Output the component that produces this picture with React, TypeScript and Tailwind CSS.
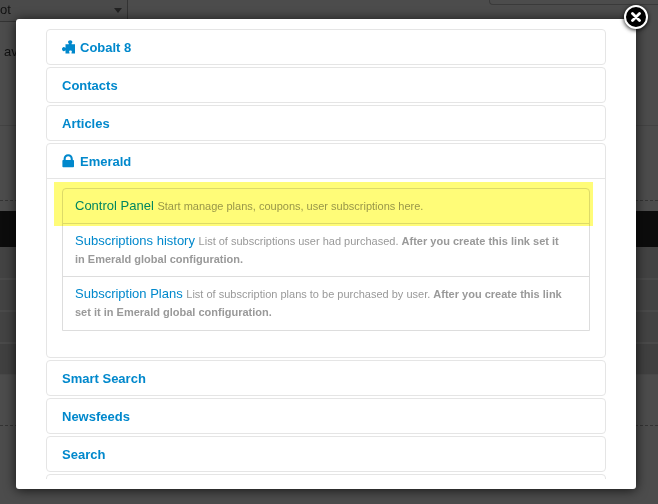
import React from "react";

type Extension = { name?: string; icon?: "puzzle" | "lock"; items?: Item[] };
type Item = { title: string; text: string; note?: string; active?: boolean };

const extensions: Extension[] = [
  { name: "Cobalt 8", icon: "puzzle" },
  { name: "Contacts" },
  { name: "Articles" },
  {
    name: "Emerald",
    icon: "lock",
    items: [
      {
        title: "Control Panel",
        text: "Start manage plans, coupons, user subscriptions here.",
        active: true,
      },
      {
        title: "Subscriptions history",
        text: "List of subscriptions user had purchased.",
        note: "After you create this link set it in Emerald global configuration.",
      },
      {
        title: "Subscription Plans",
        text: "List of subscription plans to be purchased by user.",
        note: "After you create this link set it in Emerald global configuration.",
      },
    ],
  },
  { name: "Smart Search" },
  { name: "Newsfeeds" },
  { name: "Search" },
  {},
];

function Icon({ kind }: { kind: "puzzle" | "lock" }) {
  return (
    <svg viewBox="0 0 13 14" className="-mt-[2px] h-[14px] w-[13px] shrink-0" fill="currentColor" aria-hidden="true">
      {kind === "puzzle" ? (
        <path d="M3.500 4.300h3.300V3.600C6.300 3.200 6 2.700 6 2.100 6 1 7 .2 8.200.2s2.200.8 2.200 1.900c0 .6-.3 1.100-.8 1.500v.7H13V13.500H9.500v-1c.3-.2.4-.5.4-.8 0-.7-.6-1.200-1.400-1.200s-1.400.5-1.400 1.200c0 .3.1.6.4.8v1h-4v-3h-.4c-.3.5-.8.8-1.300.8C.8 11.300 0 10.300 0 9.100s.8-2.200 1.800-2.200c.5 0 1 .3 1.300.8h.4z" />
      ) : (
        <path
          fillRule="evenodd"
          d="M1.600 6V4.900C1.600 2.200 3.600.3 6.200.3s4.600 1.900 4.600 4.600V6h.4c.5 0 .8.3.8.8v5.700c0 .5-.3.8-.8.8h-10c-.5 0-.8-.3-.8-.8V6.800c0-.5.300-.8.800-.8zm2.100 0h5V4.900c0-1.500-1-2.600-2.500-2.600S3.700 3.400 3.700 4.900z"
        />
      )}
    </svg>
  );
}

function Panel({ name, icon, items }: Extension) {
  return (
    <section className="min-h-9 shrink-0 rounded border border-[#e5e5e5]">
      {name && (
        <h2 className="text-[13px] leading-[18px] font-bold">
          <a href="#" className="flex items-center gap-[5px] px-[15px] pt-[9px] pb-[7px] text-[#0088cc]">
            {icon && <Icon kind={icon} />}
            {name}
          </a>
        </h2>
      )}
      {items && (
        <div className="border-t border-[#e5e5e5] px-[15px] pt-[9px] pb-[26px]">
          <ul className="divide-y divide-[#dddddd] rounded-t border border-[#dddddd] pb-px">
            {items.map((item) => (
              <li key={item.title} className="relative py-2 pr-5 pl-3 text-[13px] leading-[18px]">
                <a href="#" className="text-[#0088cc]">
                  {item.title}
                </a>{" "}
                <small className="text-[11px] text-[#999999]">
                  {item.text} {item.note && <strong>{item.note}</strong>}
                </small>
                {item.active && (
                  <span className="pointer-events-none absolute -top-[7px] -right-1 -bottom-[3px] -left-[9px] bg-[#fffc78] mix-blend-multiply" />
                )}
              </li>
            ))}
          </ul>
        </div>
      )}
    </section>
  );
}

function Backdrop() {
  return (
    <div className="text-[13px] leading-[18px] text-[#111111]">
      <div className="flex h-[22px] items-start justify-between">
        <div className="relative h-[22px] w-[128px]">
          <select
            aria-label="Parent item"
            className="h-[22px] w-full appearance-none border-r border-b border-[#333333] bg-[#4a4a4a] pb-px"
          >
            <option>ot</option>
          </select>
          <svg viewBox="0 0 8 5" className="pointer-events-none absolute top-2 right-[6px] h-[5px] w-2" aria-hidden="true">
            <path d="M0 0h8L4 5z" fill="#222222" />
          </svg>
        </div>
        <div className="h-[5px] w-[169px] rounded-bl border-b border-l border-[#3a3a3a]" />
      </div>
      <p className="h-[104px] border-b border-[#434343] pt-[21px] pl-1">av</p>
      <div className="h-[75px] border-b border-dashed border-[#333333]" />
      <div className="mt-[10px] h-9 bg-[#0c0c0c]" />
      <div className="divide-y-2 divide-[#4a4a4a] border-b border-[#484848] bg-[#434343]">
        <div className="h-[33px]" />
        <div className="h-8" />
        <div className="h-8" />
        <div className="h-[30px] bg-[#404040]" />
      </div>
      <div className="h-[51px] border-b border-dashed border-[#333333]" />
    </div>
  );
}

export default function App() {
  return (
    <div className="relative h-screen overflow-hidden bg-[#4c4c4c] font-['Liberation_Sans',Arial,sans-serif]">
      <Backdrop />
      <div className="absolute inset-0 pt-[19px] pr-[22px] pb-[15px] pl-4">
        <div
          role="dialog"
          aria-label="Select an extension"
          className="relative h-full rounded-[3px] bg-white px-[30px] py-[10px] shadow-[0_1px_12px_rgba(0,0,0,0.75)]"
        >
          <div className="flex h-full flex-col gap-[2px] overflow-hidden">
            {extensions.map((extension, index) => (
              <Panel key={index} {...extension} />
            ))}
          </div>
          <button
            type="button"
            aria-label="Close"
            className="absolute -top-[14px] -right-3 flex size-6 items-center justify-center rounded-full border-2 border-white bg-black shadow-[0_1px_4px_rgba(0,0,0,0.9)]"
          >
            <svg viewBox="0 0 10 10" className="size-[10px]" aria-hidden="true">
              <path d="M1.500 1.500l7 7M8.500 1.500l-7 7" stroke="white" strokeWidth="2.800" strokeLinecap="round" />
            </svg>
          </button>
        </div>
      </div>
    </div>
  );
}
